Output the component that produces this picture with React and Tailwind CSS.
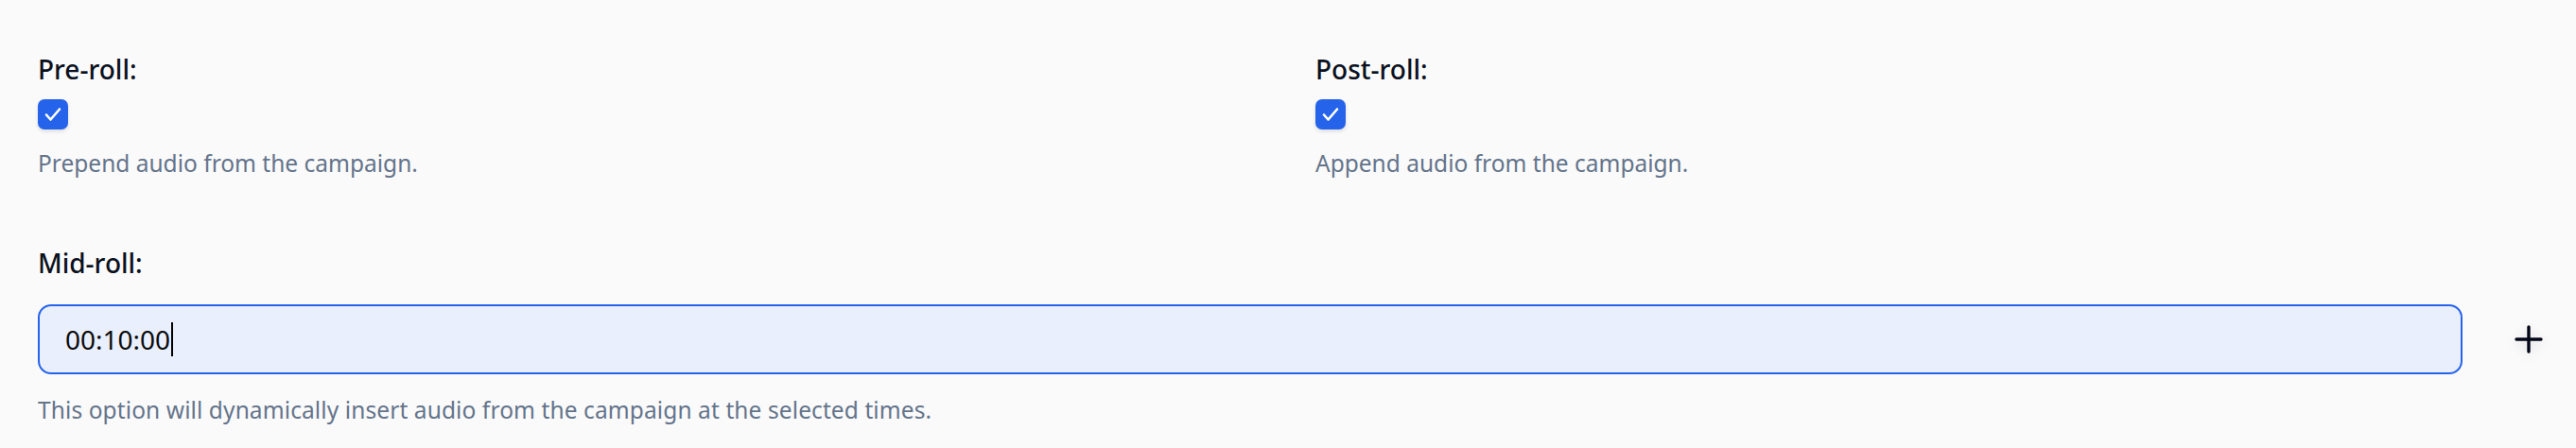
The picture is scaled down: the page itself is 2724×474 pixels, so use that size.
import { useState } from "react";

function CheckBox({ checked, onChange }) {
  return (
    <button
      type="button"
      onClick={onChange}
      className={`w-[32px] h-[32px] rounded-[7px] flex items-center justify-center shadow-[0_2px_4px_rgba(0,0,0,0.12)] ${
        checked ? "bg-[#2563eb]" : "bg-white border-2 border-gray-300"
      }`}
    >
      {checked && (
        <svg width="32" height="32" viewBox="0 0 32 32" fill="none">
          <path
            d="M9 16.5 L13.5 21.5 L23 10.5"
            stroke="white"
            strokeWidth="2.6"
            strokeLinecap="round"
            strokeLinejoin="round"
          />
        </svg>
      )}
    </button>
  );
}

function Option({ label, hint, checked, onChange }) {
  return (
    <div>
      <div className="text-[28px] leading-[42px] font-medium text-[#0b1120]">
        {label}
      </div>
      <div className="mt-[11px]">
        <CheckBox checked={checked} onChange={onChange} />
      </div>
      <p className="mt-[18px] text-[24.5px] leading-[35px] text-[#64748b]">
        {hint}
      </p>
    </div>
  );
}

export default function App() {
  const [pre, setPre] = useState(true);
  const [post, setPost] = useState(true);
  const [times] = useState(["00:10:00"]);

  return (
    <div
      className="min-h-screen bg-[#fafafa] pl-10 pr-[34px] pt-[52px]"
      style={{ fontFamily: '"Noto Sans", "Open Sans", sans-serif' }}
    >
      <div className="grid grid-cols-2 gap-x-[52px]">
        <Option
          label="Pre-roll:"
          hint="Prepend audio from the campaign."
          checked={pre}
          onChange={() => setPre(!pre)}
        />
        <Option
          label="Post-roll:"
          hint="Append audio from the campaign."
          checked={post}
          onChange={() => setPost(!post)}
        />
      </div>

      {/* Mid-roll */}
      <div className="mt-[67px]">
        <div className="text-[28px] leading-[42px] font-medium text-[#0b1120]">
          Mid-roll:
        </div>
        {times.map((t) => (
          <div key={t} className="mt-[23px] flex items-center">
            <div
              role="textbox"
              className="flex-1 h-[74px] rounded-[14px] border-2 border-[#2563eb] bg-[#e9effd] px-[27px] flex items-center text-[28px] text-[#0b0b0b]"
            >
              <span>{t}</span>
              <span className="w-[2px] h-[36px] bg-black ml-[1px]" />
            </div>
            <button
              type="button"
              className="ml-[54px] w-[32px] h-[32px] flex items-center justify-center"
            >
              <svg
                width="32"
                height="32"
                viewBox="0 0 32 32"
                fill="none"
                className="drop-shadow-[0_3px_6px_rgba(0,0,0,0.12)]"
              >
                <path
                  d="M16 3 V29 M3 16 H29"
                  stroke="#020617"
                  strokeWidth="3.4"
                  strokeLinecap="round"
                />
              </svg>
            </button>
          </div>
        ))}
        <p className="mt-[20px] text-[24.5px] leading-[35px] tracking-[0.1px] text-[#64748b]">
          This option will dynamically insert audio from the campaign at the
          selected times.
        </p>
      </div>
    </div>
  );
}
